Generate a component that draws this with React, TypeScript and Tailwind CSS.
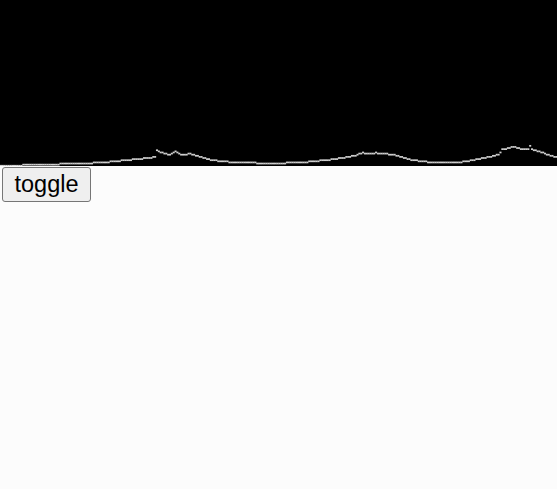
import React from "react";

const pts: [number, number][] = [
  [0, 166], [40, 165], [70, 164], [100, 163], [130, 160], [152, 158], [155, 157],
  [157, 150], [160, 152], [163, 153], [168, 155], [172, 154], [175, 152], [178, 153], [182, 155],
  [190, 154], [200, 157], [210, 160], [225, 162], [245, 163], [270, 163.5], [300, 163],
  [320, 161], [330, 160], [343, 158], [355, 156], [362, 153], [368, 154], [372, 154],
  [375, 153], [385, 154], [395, 155], [400, 157], [410, 160], [425, 162], [445, 163],
  [465, 162], [480, 159], [490, 157], [500, 154], [502, 150], [510, 148], [515, 147],
  [520, 149], [528, 150], [530, 146], [532, 150], [540, 152], [548, 155], [557, 158],
];

function interp(x: number): number {
  for (let i = 0; i < pts.length - 1; i++) {
    const [x0, y0] = pts[i];
    const [x1, y1] = pts[i + 1];
    if (x >= x0 && x <= x1) {
      const t = x1 === x0 ? 0 : (x - x0) / (x1 - x0);
      return y0 + (y1 - y0) * t;
    }
  }
  return pts[pts.length - 1][1];
}

const SX = 557 / 300;
const SY = 166 / 150;

const cells = Array.from({ length: 300 }, (_, i) => {
  const x = i * SX;
  const yc = Math.round(interp(x + SX / 2) / SY) - 1;
  return { x, y: yc * SY };
});

export default function App() {
  return (
    <div className="min-h-[489px] w-full bg-[#fcfcfc]" style={{ fontFamily: '"Liberation Sans", Arial, sans-serif' }}>
      <div className="h-[166px] w-full bg-black">
        <svg width="557" height="166" viewBox="0 0 557 166" className="block">
          {cells.map((c, i) => (
            <rect key={i} x={c.x} y={c.y} width={SX + 0.2} height={SY + 0.6} fill="#cfcfcf" />
          ))}
        </svg>
      </div>
      <button className="ml-[2px] mt-[1px] block h-[35px] w-[89px] rounded-[3px] border border-[#767676] bg-[#efefef] text-[23.5px] leading-none text-black">
        toggle
      </button>
    </div>
  );
}
